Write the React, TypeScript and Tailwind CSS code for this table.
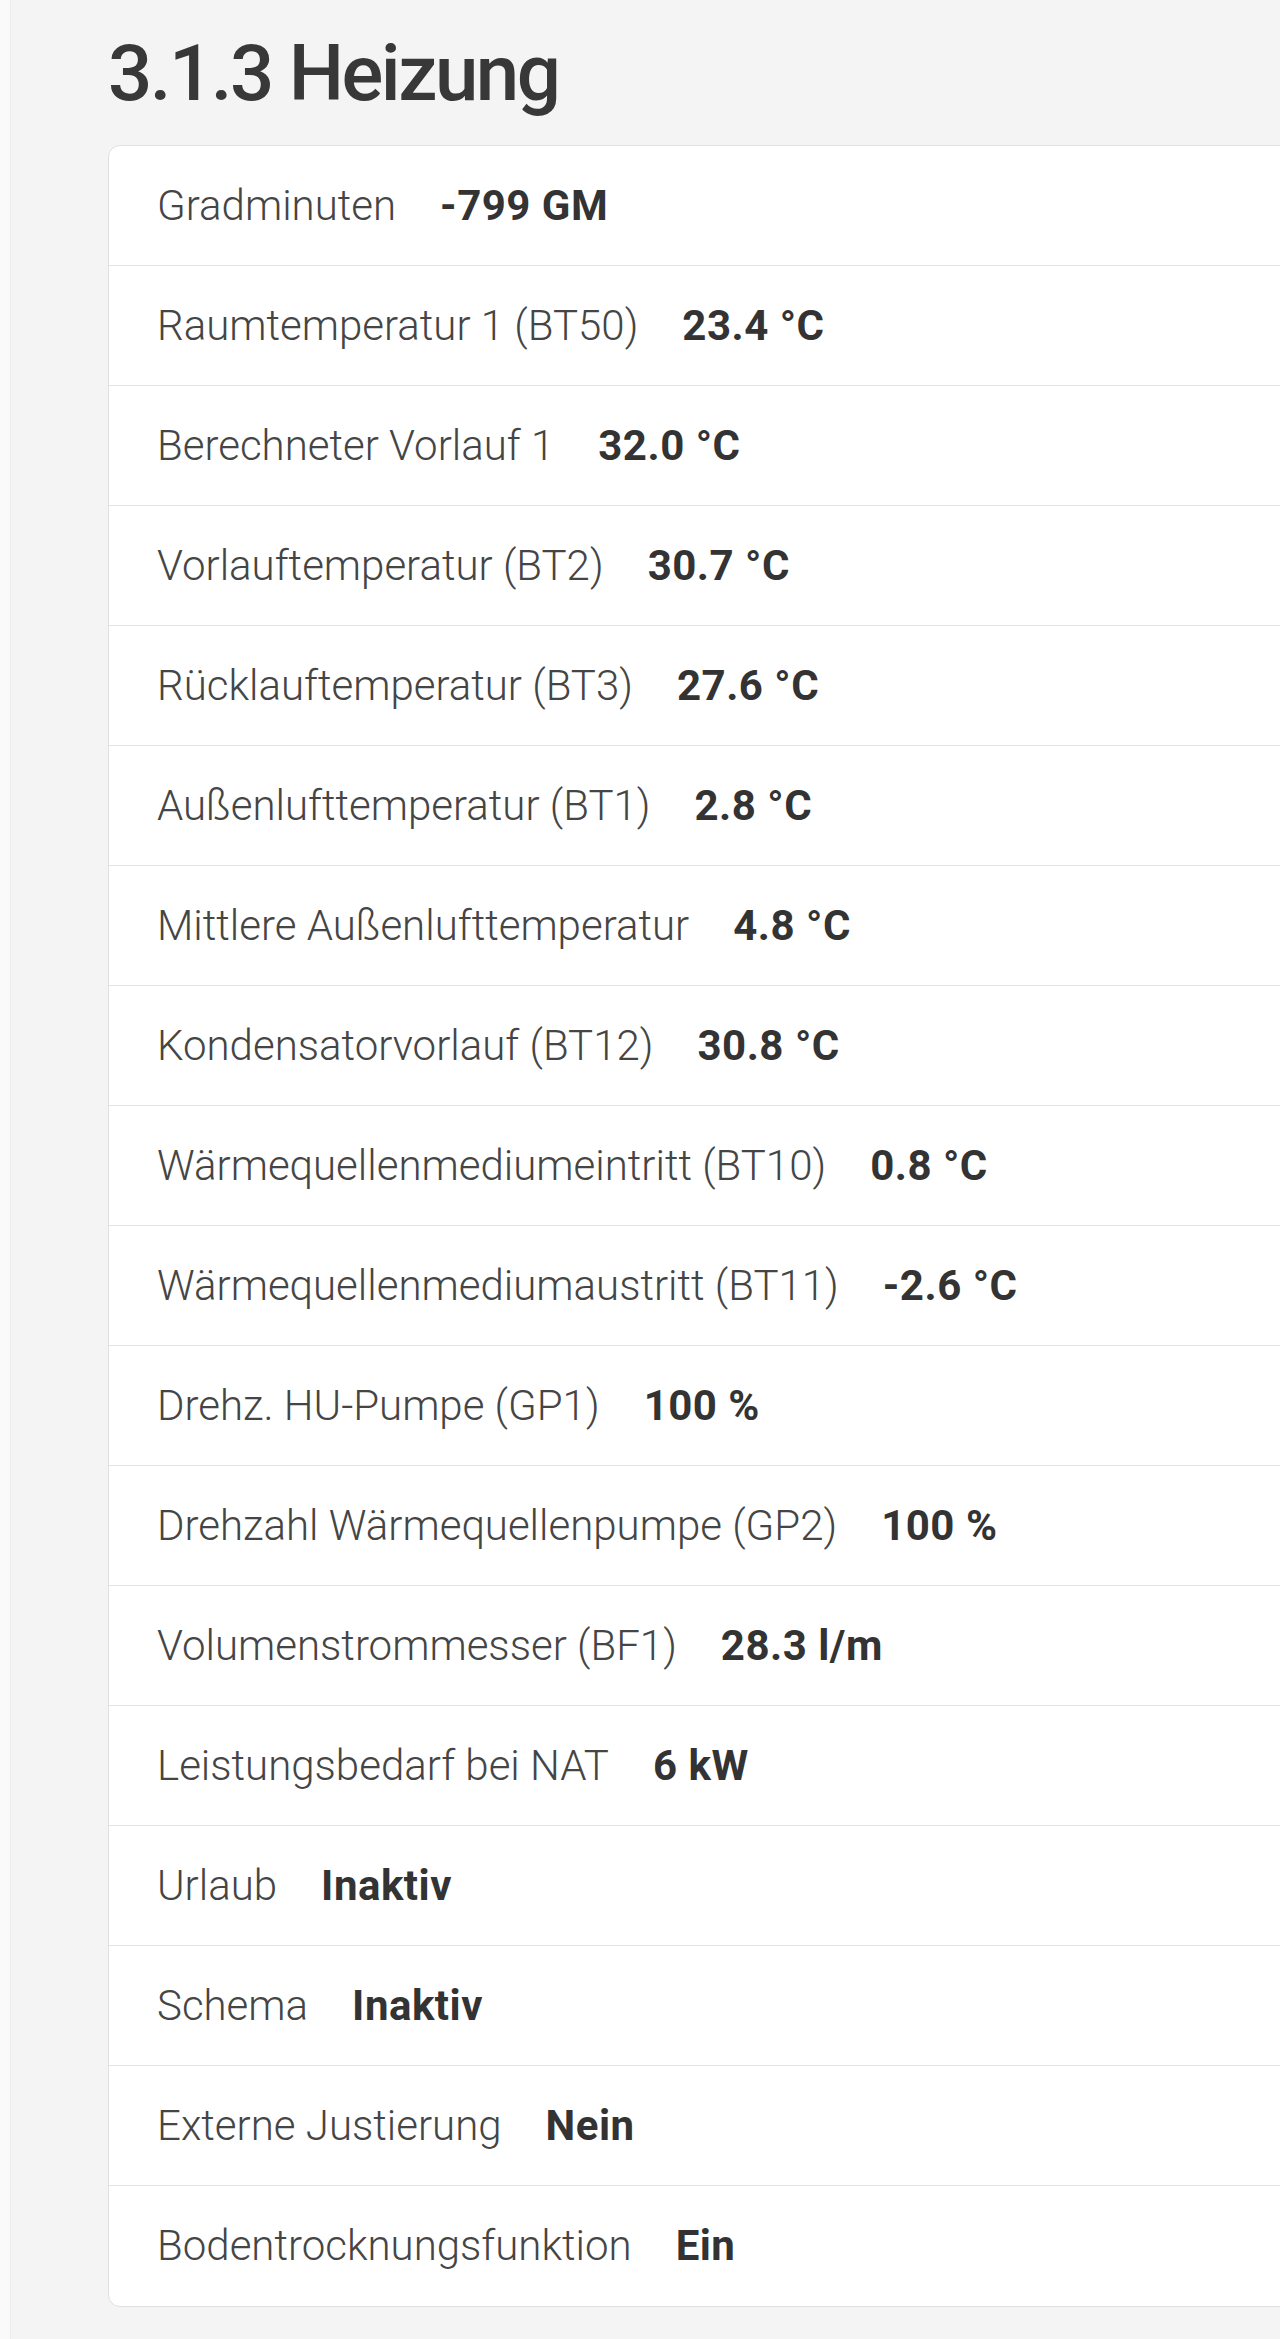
import React from 'react';

interface Reading {
    label: string;
    value: string;
}

const readings: Reading[] = [
    { label: 'Gradminuten', value: '-799 GM' },
    { label: 'Raumtemperatur 1 (BT50)', value: '23.4 °C' },
    { label: 'Berechneter Vorlauf 1', value: '32.0 °C' },
    { label: 'Vorlauftemperatur (BT2)', value: '30.7 °C' },
    { label: 'Rücklauftemperatur (BT3)', value: '27.6 °C' },
    { label: 'Außenlufttemperatur (BT1)', value: '2.8 °C' },
    { label: 'Mittlere Außenlufttemperatur', value: '4.8 °C' },
    { label: 'Kondensatorvorlauf (BT12)', value: '30.8 °C' },
    { label: 'Wärmequellenmediumeintritt (BT10)', value: '0.8 °C' },
    { label: 'Wärmequellenmediumaustritt (BT11)', value: '-2.6 °C' },
    { label: 'Drehz. HU-Pumpe (GP1)', value: '100 %' },
    { label: 'Drehzahl Wärmequellenpumpe (GP2)', value: '100 %' },
    { label: 'Volumenstrommesser (BF1)', value: '28.3 l/m' },
    { label: 'Leistungsbedarf bei NAT', value: '6 kW' },
    { label: 'Urlaub', value: 'Inaktiv' },
    { label: 'Schema', value: 'Inaktiv' },
    { label: 'Externe Justierung', value: 'Nein' },
    { label: 'Bodentrocknungsfunktion', value: 'Ein' },
];

const ReadingRow: React.FC<{ reading: Reading; last: boolean }> = ({ reading, last }) => (
    <div
        className={`flex h-[120px] items-center pl-[48px] ${last ? '' : 'border-b border-[#e4e4e4]'}`}
    >
        <span className="text-[42px] font-light text-[#454545]">{reading.label}</span>
        <span className="ml-[44px] text-[42px] font-bold tracking-[0.5px] text-[#333333]">
            {reading.value}
        </span>
    </div>
);

export default function App() {
    return (
        <div
            className="flex h-[2339px] w-[1280px] overflow-hidden bg-[#f4f4f4]"
            style={{ fontFamily: 'Roboto, "Liberation Sans", sans-serif' }}
        >
            <div className="w-[11px] shrink-0 border-r border-[#ececec] bg-[#fafafa]" />
            <main className="flex-1 pl-[97px]">
                <h1 className="mt-[27px] text-[78px] font-medium leading-[1.2] tracking-[-2.5px] text-[#383838]">
                    3.1.3 Heizung
                </h1>
                <div className="mt-[24px] w-[1220px] overflow-hidden rounded-[12px] border border-[#e0e0e0] bg-white">
                    {readings.map((r, i) => (
                        <ReadingRow key={r.label} reading={r} last={i === readings.length - 1} />
                    ))}
                </div>
            </main>
        </div>
    );
}
